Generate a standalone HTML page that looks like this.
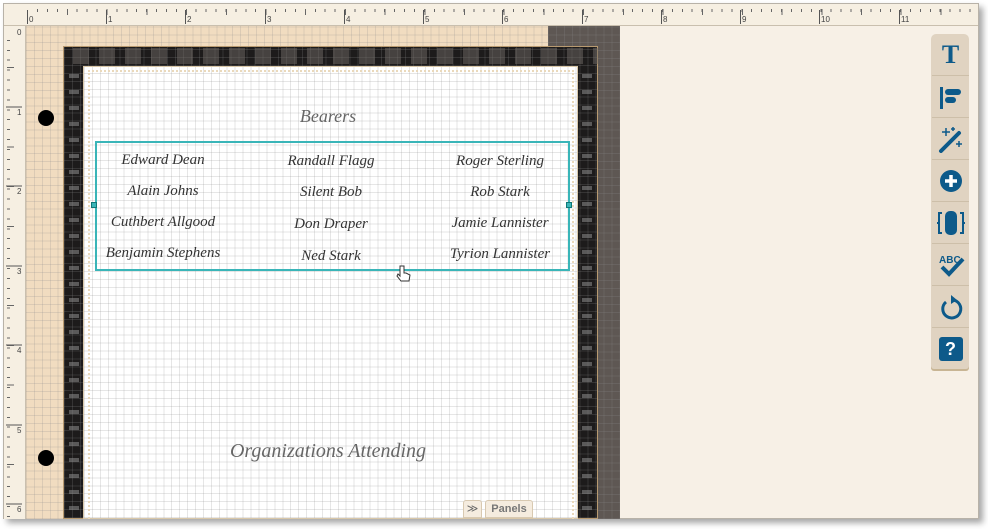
<!DOCTYPE html>
<html><head><meta charset="utf-8"><style>
*{margin:0;padding:0;box-sizing:border-box}
body{width:988px;height:529px;background:#fff;position:relative;overflow:hidden;font-family:"Liberation Serif",serif}
.abs{position:absolute}
.grid{background-image:repeating-linear-gradient(90deg,rgba(140,140,140,.22) 0 1px,transparent 1px 7.93px),repeating-linear-gradient(0deg,rgba(140,140,140,.22) 0 1px,transparent 1px 7.93px)}
.name{position:absolute;font-style:italic;font-size:15px;color:#333;white-space:nowrap;transform:translateX(-50%)}
.tb{position:absolute;left:932px;width:37px;height:42px;border-bottom:1px solid #cdbfa9;display:flex;align-items:center;justify-content:center}
</style></head><body>
<div class="abs" style="left:3px;top:3px;width:976px;height:516px;background:#f7f0e6;border:1px solid #b8b2a8;box-shadow:4px 4px 6px rgba(0,0,0,.35)"></div>
<!-- top ruler -->
<div class="abs" style="left:4px;top:4px;width:974px;height:22px;background:#f6efe2;border-bottom:1px solid #c9bfae"></div>
<div class="abs" style="left:37px;top:9px;width:940px;height:3px;background:repeating-linear-gradient(90deg,#666 0 1px,transparent 1px 9.92px)"></div>
<div class="abs" style="left:67px;top:9px;width:910px;height:6px;background:repeating-linear-gradient(90deg,#666 0 1px,transparent 1px 39.7px)"></div>
<svg class="abs" style="left:0;top:0" width="988" height="30">
<g stroke="#555" stroke-width="1">
<line x1="27.5" y1="10" x2="27.5" y2="24"/><line x1="106.5" y1="10" x2="106.5" y2="24"/><line x1="185.5" y1="10" x2="185.5" y2="24"/><line x1="265.5" y1="10" x2="265.5" y2="24"/><line x1="344.5" y1="10" x2="344.5" y2="24"/><line x1="423.5" y1="10" x2="423.5" y2="24"/><line x1="502.5" y1="10" x2="502.5" y2="24"/><line x1="582.5" y1="10" x2="582.5" y2="24"/><line x1="661.5" y1="10" x2="661.5" y2="24"/><line x1="740.5" y1="10" x2="740.5" y2="24"/><line x1="819.5" y1="10" x2="819.5" y2="24"/><line x1="899.5" y1="10" x2="899.5" y2="24"/>
</g>
<g font-family="Liberation Sans" font-size="8" fill="#444">
<text x="29" y="22">0</text><text x="108" y="22">1</text><text x="187" y="22">2</text><text x="267" y="22">3</text><text x="346" y="22">4</text><text x="425" y="22">5</text><text x="504" y="22">6</text><text x="584" y="22">7</text><text x="663" y="22">8</text><text x="742" y="22">9</text><text x="821" y="22">10</text><text x="901" y="22">11</text>
</g>
</svg>
<!-- left ruler -->
<div class="abs" style="left:4px;top:26px;width:22px;height:493px;background:#f6efe2;border-right:1px solid #c9bfae"></div>
<div class="abs" style="left:7px;top:37px;width:3px;height:480px;background:repeating-linear-gradient(0deg,#666 0 1px,transparent 1px 9.92px)"></div>
<div class="abs" style="left:7px;top:67px;width:7px;height:450px;background:repeating-linear-gradient(180deg,#666 0 1px,transparent 1px 39.7px)"></div>
<svg class="abs" style="left:0;top:26" width="26" height="493">
<g stroke="#555"><line x1="6" y1="81" x2="22" y2="81"/><line x1="6" y1="160" x2="22" y2="160"/><line x1="6" y1="240" x2="22" y2="240"/><line x1="6" y1="319" x2="22" y2="319"/><line x1="6" y1="399" x2="22" y2="399"/><line x1="6" y1="478" x2="22" y2="478"/></g>
<g font-family="Liberation Sans" font-size="8" fill="#444"><text x="17" y="9">0</text><text x="17" y="89">1</text><text x="17" y="168">2</text><text x="17" y="248">3</text><text x="17" y="327">4</text><text x="17" y="407">5</text><text x="17" y="486">6</text></g>
</svg>
<!-- canvas -->
<div class="abs grid" style="left:26px;top:26px;width:522px;height:493px;background-color:#f1dcc0"></div>
<div class="abs grid" style="left:548px;top:26px;width:72px;height:493px;background-color:#5e5753"></div>
<div class="abs grid" style="left:63px;top:46px;width:535px;height:473px;background-color:#1d1b1b;border:1px solid #b89a70"></div>
<div class="abs" style="left:63px;top:48px;width:535px;height:16px;background:repeating-linear-gradient(90deg,transparent 0 10px,rgba(110,105,100,.5) 10px 26px);"></div>
<div class="abs" style="left:69px;top:68px;width:10px;height:451px;background:repeating-linear-gradient(0deg,transparent 0 9px,rgba(140,140,140,.55) 9px 13px,transparent 13px 16px)"></div>
<div class="abs" style="left:582px;top:68px;width:10px;height:451px;background:repeating-linear-gradient(0deg,transparent 0 9px,rgba(140,140,140,.55) 9px 13px,transparent 13px 16px)"></div>
<div class="abs grid" style="left:83px;top:66px;width:495px;height:453px;background-color:#fff;border:1px solid #d9c7a8"></div>
<div class="abs" style="left:88px;top:70px;width:486px;height:449px;border:2px dotted #ead9bb;border-bottom:none"></div>
<div class="abs" style="left:38px;top:110px;width:16px;height:16px;border-radius:50%;background:#000"></div>
<div class="abs" style="left:38px;top:450px;width:16px;height:16px;border-radius:50%;background:#000"></div>
<!-- titles -->
<div class="abs" style="left:228px;top:106px;width:200px;text-align:center;font-style:italic;font-size:18px;color:#666">Bearers</div>
<div class="abs" style="left:203px;top:440px;width:250px;text-align:center;font-style:italic;font-size:20px;color:#666">Organizations Attending</div>
<!-- selection -->
<div class="abs" style="left:95px;top:141px;width:475px;height:130px;border:2px solid #3ab5b8"></div>
<div class="abs" style="left:91px;top:202px;width:6px;height:6px;background:#3ab5b8;border:1px solid #177"></div>
<div class="abs" style="left:566px;top:202px;width:6px;height:6px;background:#3ab5b8;border:1px solid #177"></div>
<div class="name" style="left:163px;top:152px">Edward Dean</div>
<div class="name" style="left:163px;top:183px">Alain Johns</div>
<div class="name" style="left:163px;top:214px">Cuthbert Allgood</div>
<div class="name" style="left:163px;top:245px">Benjamin Stephens</div>
<div class="name" style="left:331px;top:153px">Randall Flagg</div>
<div class="name" style="left:331px;top:184px">Silent Bob</div>
<div class="name" style="left:331px;top:216px">Don Draper</div>
<div class="name" style="left:331px;top:248px">Ned Stark</div>
<div class="name" style="left:500px;top:153px">Roger Sterling</div>
<div class="name" style="left:500px;top:184px">Rob Stark</div>
<div class="name" style="left:500px;top:215px">Jamie Lannister</div>
<div class="name" style="left:500px;top:246px">Tyrion Lannister</div>
<svg class="abs" style="left:396px;top:264px" width="16" height="20"><path d="M4 2v10l-2-2-1 2 4 5h8l1-6-4-2V9l-2 0V2z" fill="#fff" stroke="#333"/></svg>
<!-- panels -->
<div class="abs" style="left:463px;top:500px;width:19px;height:18px;background:#f5ecdf;border:1px solid #d8c9b1;border-radius:3px 3px 0 0;color:#666;font-size:11px;text-align:center;line-height:16px;font-family:'Liberation Sans'">&#8811;</div>
<div class="abs" style="left:485px;top:500px;width:48px;height:18px;background:#f5ecdf;border:1px solid #d8c9b1;border-radius:3px 3px 0 0;color:#777;font-size:11px;font-weight:bold;text-align:center;line-height:17px;font-family:'Liberation Sans'">Panels</div>
<!-- toolbar -->
<div class="abs" style="left:931px;top:34px;width:38px;height:335px;background:#e0d3c1;border-radius:5px 5px 3px 3px;box-shadow:0 2px 0 #c8b594"></div>
<div class="tb" style="top:34px"><span style="font:bold 26px 'Liberation Serif';color:#0d5a8a">T</span></div>
<div class="tb" style="top:76px"><svg width="26" height="26"><rect x="2" y="3" width="3" height="22" fill="#0d5a8a"/><rect x="7" y="5" width="16" height="6" rx="3" fill="#0d5a8a"/><rect x="7" y="13" width="11" height="6" rx="3" fill="#0d5a8a"/></svg></div>
<div class="tb" style="top:118px"><svg width="28" height="28"><path d="M4 26L22 8" stroke="#0d5a8a" stroke-width="4" stroke-linecap="round"/><path d="M9 3v8M5 7h8M22 16v6M19 19h6M16 2v4M14 4h4" stroke="#0d5a8a" stroke-width="1.5"/></svg></div>
<div class="tb" style="top:160px"><svg width="26" height="26"><circle cx="13" cy="13" r="11" fill="#0d5a8a"/><path d="M13 7v12M7 13h12" stroke="#fff" stroke-width="3.5"/></svg></div>
<div class="tb" style="top:202px"><svg width="32" height="28"><rect x="10" y="2" width="12" height="24" rx="5" fill="#0d5a8a"/><path d="M7 4H4v20h3M25 4h3v20h-3M2 14h3M27 14h3" stroke="#0d5a8a" stroke-width="2" fill="none"/></svg></div>
<div class="tb" style="top:244px"><svg width="30" height="28"><text x="3" y="12" font-family="Liberation Sans" font-weight="bold" font-size="10" fill="#0d5a8a">ABC</text><path d="M6 16l7 7L27 8" stroke="#0d5a8a" stroke-width="4" fill="none"/></svg></div>
<div class="tb" style="top:286px"><svg width="26" height="28"><path d="M8 9a9 9 0 1 0 7-2" stroke="#0d5a8a" stroke-width="3" fill="none"/><path d="M13 2l6 5-6 4z" fill="#0d5a8a"/></svg></div>
<div class="tb" style="top:328px;border:none"><div style="width:24px;height:24px;background:#0d5a8a;border-radius:3px;color:#fff;font:bold 18px 'Liberation Sans';text-align:center;line-height:24px">?</div></div>
</body></html>
